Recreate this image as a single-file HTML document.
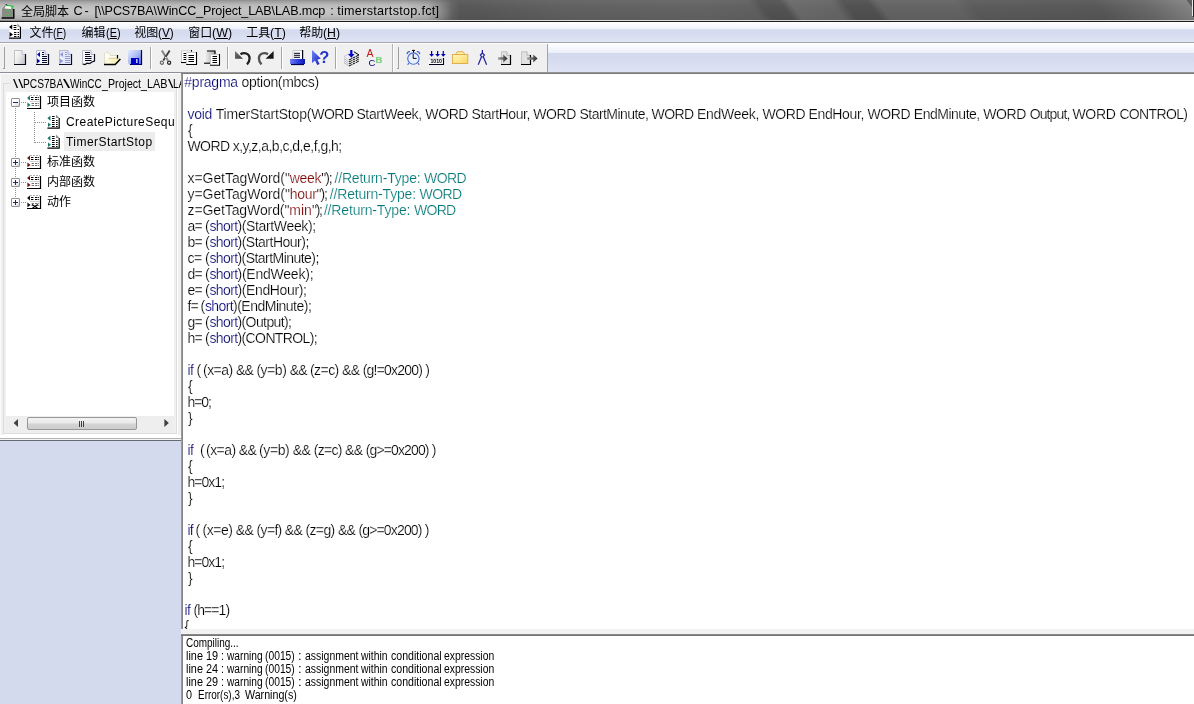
<!DOCTYPE html>
<html lang="zh">
<head>
<meta charset="utf-8">
<title>全局脚本 C</title>
<style>
html,body{margin:0;padding:0;}
body{width:1194px;height:704px;overflow:hidden;position:relative;background:#fff;
  font-family:"Liberation Sans","Noto Sans CJK SC",sans-serif;font-size:12px;color:#000;}
.abs{position:absolute;}
/* ---------- title bar ---------- */
#title{left:0;top:0;width:1194px;height:20px;overflow:hidden;background:linear-gradient(180deg,#606060 0%,#585858 35%,#525252 100%);}
#streaks{position:absolute;left:0;top:0;width:1194px;height:20px;transform:skewX(37deg);transform-origin:50% 50%;
  background:linear-gradient(90deg,
    rgba(255,255,255,0) 470px, rgba(255,255,255,.05) 560px, rgba(255,255,255,.07) 700px, rgba(255,255,255,.05) 755px,
    rgba(0,0,0,.06) 765px, rgba(0,0,0,.06) 786px,
    rgba(255,255,255,.11) 796px, rgba(255,255,255,.08) 838px,
    rgba(0,0,0,.08) 850px, rgba(0,0,0,.08) 874px,
    rgba(255,255,255,.07) 884px, rgba(255,255,255,.07) 960px,
    rgba(255,255,255,.02) 975px, rgba(255,255,255,.0) 1100px, rgba(255,255,255,.10) 1150px, rgba(255,255,255,.28) 1200px);}
#tline1{left:0;top:20px;width:1194px;height:1px;background:linear-gradient(90deg,#8a8a8a 0,#e0e0e0 300px,#d0d0d0 1194px);}
#tline2{left:0;top:21px;width:1194px;height:1px;background:#1c1c1c;}
#glow{left:0;top:0;width:470px;height:20px;
  background:linear-gradient(180deg,#8e8e8e 0px,#a4a4a4 2px,#bababa 5px,#c4c4c4 9px,#c2c2c2 14px,#b4b4b4 18px,#a8a8a8 20px);
  -webkit-mask-image:linear-gradient(90deg,#000 0px,#000 405px,rgba(0,0,0,.82) 428px,rgba(0,0,0,.45) 442px,rgba(0,0,0,.12) 452px,transparent 460px);
  mask-image:linear-gradient(90deg,#000 0px,#000 405px,rgba(0,0,0,.82) 428px,rgba(0,0,0,.45) 442px,rgba(0,0,0,.12) 452px,transparent 460px);}
.tt2{position:absolute;top:2px;height:18px;line-height:18px;font-size:12.6px;white-space:pre;color:#000;
  font-family:"Liberation Sans","Noto Sans CJK SC",sans-serif;}
/* ---------- menu bar ---------- */
#menu{left:0;top:22px;width:1194px;height:21px;
  background:linear-gradient(180deg,#ffffff 0%,#f8f9fd 15%,#eff2fa 35%,#d6dcef 38%,#d6dcef 60%,#e0e5f5 100%);
  border-bottom:1px solid #a5a7ad;box-sizing:border-box;}
.mi{position:absolute;top:24px;height:18px;line-height:18px;font-size:12px;white-space:pre;}
.mi u{text-decoration:underline;text-underline-offset:1px;}
.mi span{font-size:13px;display:inline-block;transform-origin:0 50%;}
/* ---------- tool bar ---------- */
#tool{left:0;top:43px;width:1194px;height:29px;
  background:linear-gradient(180deg,#ffffff 0%,#f5f7fc 18%,#eceff8 33%,#d4daee 36%,#d6dcef 62%,#dfe4f4 100%);
  border-bottom:1px solid #8e8e96;}
#toolgray{left:0;top:44px;width:547px;height:28px;background:#f0f0f0;border-right:1px solid #a4a4a4;}
.sep{position:absolute;top:47px;width:1px;height:22px;background:#a6a6a6;border-right:1px solid #fff;}
/* ---------- tree ---------- */
#treewrap{left:0;top:73px;width:181px;height:365px;background:#f0f0f0;}
#gbox{left:3px;top:83px;width:174px;height:351px;border:1px solid #dcdcdc;box-sizing:border-box;box-shadow:1px 1px 0 #fff;}
#tree{left:6px;top:92px;width:168px;height:324px;background:#fff;}
#lav{left:0;top:441px;width:181px;height:263px;background:#d4daed;}
.tl{position:absolute;white-space:pre;font-size:12px;height:18px;line-height:18px;}

.ic{position:absolute;top:49px;width:16px;height:16px;overflow:visible;}
.grip{position:absolute;top:47px;width:2px;height:22px;border-right:1px solid #a0a0a0;border-bottom:1px solid #a0a0a0;background:linear-gradient(90deg,#f0f0f0 0,#f0f0f0 1px,#fff 1px);box-sizing:border-box;}
.vd{position:absolute;width:1px;background:repeating-linear-gradient(180deg,#909090 0,#909090 1px,transparent 1px,transparent 2px);}
.hd{position:absolute;height:1px;background:repeating-linear-gradient(90deg,#909090 0,#909090 1px,transparent 1px,transparent 2px);}
.ex{position:absolute;left:11px;width:9px;height:9px;box-sizing:border-box;border:1px solid #919191;border-radius:1px;background:linear-gradient(135deg,#fff 0%,#fff 40%,#d8d8d8 100%);}
.ex i{position:absolute;left:1px;top:3px;width:5px;height:1px;background:#1a2a6a;}
.ex b{position:absolute;left:3px;top:1px;width:1px;height:5px;background:#1a2a6a;}
.ti{position:absolute;width:16px;height:16px;overflow:visible;}
.tt{letter-spacing:0.45px;}
/* ---------- code ---------- */
#code{left:183px;top:74px;width:1011px;height:555px;background:#fff;overflow:hidden;}
.cl{position:absolute;white-space:pre;font-size:14px;height:16px;line-height:16px;margin-top:0px;-webkit-text-stroke:0.2px #fff;
  font-family:"Liberation Sans",sans-serif;}
.k{color:#000074}.s{color:#7a0000}.c{color:#007676}
/* ---------- output ---------- */
#out{left:183px;top:636px;width:1011px;height:68px;background:#fff;overflow:hidden;}
.ol{position:absolute;white-space:pre;font-size:12px;height:13px;line-height:13px;font-family:"Liberation Sans",sans-serif;transform-origin:0 0;}
</style>
</head>
<body>
<div id="wrap" style="position:absolute;left:0;top:0;width:1194px;height:704px;will-change:transform">
<div id="title" class="abs"><div id="streaks"></div></div>
<div id="glow" class="abs"></div>
<div id="tline1" class="abs"></div><div id="tline2" class="abs"></div>
<div class="abs" style="left:1192px;top:0;width:1px;height:16px;background:#e8e8e8"></div><div class="abs" style="left:1193px;top:0;width:1px;height:17px;background:#202020"></div>
<div class="tt2" style="left:21.1px;font-family:'Noto Sans CJK SC',sans-serif;font-size:12px">全局脚本</div>
<div class="tt2" style="left:73.40px;letter-spacing:-2.000px">C</div>
<div class="tt2" style="left:84.40px;letter-spacing:0.600px">-</div>
<div class="tt2" style="left:94.50px;letter-spacing:-0.128px">[\\PCS7BA\WinCC_Project_LAB\LAB.mcp</div>
<div class="tt2" style="left:330.30px;letter-spacing:-0.300px">:</div>
<div class="tt2" style="left:337.20px;letter-spacing:0.296px">timerstartstop.fct]</div>

<div id="menu" class="abs"></div>
<div class="mi" style="left:29.4px">文件<span style="transform:scaleX(0.79)">(<u>F</u>)</span></div>
<div class="mi" style="left:81.6px">编辑<span style="transform:scaleX(0.84)">(<u>E</u>)</span></div>
<div class="mi" style="left:134.2px">视图<span style="transform:scaleX(0.91)">(<u>V</u>)</span></div>
<div class="mi" style="left:188.2px">窗口<span style="transform:scaleX(0.955)">(<u>W</u>)</span></div>
<div class="mi" style="left:246.2px">工具<span style="transform:scaleX(0.95)">(<u>T</u>)</span></div>
<div class="mi" style="left:299.3px">帮助<span style="transform:scaleX(0.945)">(<u>H</u>)</span></div>
<!-- title icon -->
<svg class="abs" style="left:1px;top:3px" width="15" height="16" viewBox="0 0 15 16"><path d="M1 14.5V6L4 2.5H11L12.5 6V14.5Z" fill="#8a8a86"/><path d="M3.5 5.5L5 2.2L11.5 3.2L10 6Z" fill="#f4fff0"/><path d="M4.5 2L12 3.4L10.6 5.4" fill="none" stroke="#2cc040" stroke-width="1.2"/><path d="M5 1.2L6 2.4" stroke="#000" stroke-width="1"/><path d="M12.8 6V15H0.6" fill="none" stroke="#000" stroke-width="1.4"/><text x="3.4" y="13.2" font-family="Liberation Sans, sans-serif" font-size="9.5" fill="#3cc24c" fill-opacity=".85">C</text></svg>
<!-- menu icon -->
<svg class="abs" style="left:8px;top:23px" width="14" height="16" viewBox="0 0 14 16"><path d="M4 0.6H9.4L12.6 3.8V15H1.4V0.6Z" fill="#fff"/><path d="M9.4 0.6V3.8H12.6Z" fill="#909090"/><path d="M12.4 3.8V15.2H1" fill="none" stroke="#000" stroke-width="1.2"/><path d="M1 4L4.2 1.4V6.6Z M1.6 9V14L5 11.5Z" fill="#000"/><path d="M5.6 2.5H8.4M5.6 4.5H8.4M5.6 6.5H8.4M9.6 6.5H11M6 9.5H8.4M9.6 9.5H11M6 11.5H8.4M9.6 11.5H11M6 13.5H8.4M9.6 13.5H11" stroke="#000" stroke-width="1.1"/></svg>
<div id="tool" class="abs"></div>
<div id="toolgray" class="abs"></div>
<!-- toolbar grippers / separators -->
<div class="grip" style="left:3px"></div>
<div class="grip" style="left:397px"></div>
<div class="sep" style="left:150px"></div>
<div class="sep" style="left:227px"></div>
<div class="sep" style="left:281px"></div>
<div class="sep" style="left:335px"></div>
<div class="abs" style="left:392px;top:44px;width:1px;height:28px;background:#b4b4b4"></div>
<div class="abs" style="left:393px;top:44px;width:1px;height:28px;background:#fff"></div>

<svg class="ic" style="left:13px;width:16px;height:16px" viewBox="0 0 16 16"><defs><linearGradient id="gN" x1="0" y1="0" x2="1" y2="0.6"><stop offset="0" stop-color="#ffffff"/><stop offset="0.5" stop-color="#ecece8"/><stop offset="1" stop-color="#c4c6d2"/></linearGradient></defs>
<path d="M1 1H9L13 5V16H1Z" fill="url(#gN)"/><path d="M1.5 15V1.5H9" fill="none" stroke="#c0c0c4"/><path d="M9 1.5L9 5.5H13" fill="#e8e8f4" stroke="#b8b8c8" stroke-width=".8"/><path d="M12.5 5V15.5H1" fill="none" stroke="#0a0a18" stroke-width="1.2"/></svg>

<svg class="ic" style="left:35px;width:16px;height:16px" viewBox="0 0 16 16"><path d="M1 1H10L14 5V16H1Z" fill="#f4f6ff"/><path d="M1.5 15V1.5H10" fill="none" stroke="#b8bcd0"/><path d="M10 1.5V5.5H14" fill="#d8dcf8" stroke="#a8acd0" stroke-width=".8"/><path d="M13.5 5V15.5H1" fill="none" stroke="#0a0a20" stroke-width="1.2"/>
<path d="M2 5.5L5 3V8Z M2 9.5V14.5L5.2 12Z" fill="#0808a0"/><path d="M7 3.5H9M7 5.5H9M7 7.5H12M7 9.5H12M7 11.5H12M7 13.5H12" stroke="#080828" stroke-width="1"/></svg>

<svg class="ic" style="left:58px;width:16px;height:16px" viewBox="0 0 16 16"><path d="M1 1H10L14 5V16H1Z" fill="#e4e8fc"/><path d="M1.5 15V1.5H10" fill="none" stroke="#b8bcc8"/><path d="M10 1.5V5.5H14" fill="#d8dcf8" stroke="#a8acc8" stroke-width=".8"/><path d="M13.5 5V15.5H1" fill="none" stroke="#0a0a20" stroke-width="1.2"/>
<path d="M2 5.5L5 3V8Z M2 9.5V14.5L5.2 12Z" fill="#9494d0"/><path d="M2 8L5 9.5V11L2 9.5Z" fill="#f4fcff"/><path d="M7 3.5H9M7 5.5H9M7 7.5H12M7 9.5H12M7 11.5H12M7 13.5H12" stroke="#949cd4" stroke-width="1"/></svg>

<svg class="ic" style="left:81px;width:16px;height:16px" viewBox="0 0 16 16"><path d="M1 1H10L14 5V12L11 13L8 14.5L6 14L4 15.5L1 15Z" fill="#f6f6fc"/><path d="M1.5 14.5V1.5H10" fill="none" stroke="#b8bcc8"/><path d="M10 1.5V5.5H14" fill="#e0e0f0" stroke="#b0b0c8" stroke-width=".8"/><path d="M13.5 5V12L11 13L8.5 14.6L6 14.2L4 15.5L1.5 15" fill="none" stroke="#0a0a18" stroke-width="1.2"/>
<path d="M4 3.5H9M4 5.5H9M4 7.5H10.5M4 9.5H10.5M4 11.5H10.5" stroke="#080820" stroke-width="1"/></svg>

<svg class="ic" style="left:104px;width:17px;height:16px" viewBox="0 0 17 16"><defs><linearGradient id="gO" x1="0" y1="0" x2="1" y2="0"><stop offset="0" stop-color="#fffef0"/><stop offset="1" stop-color="#f6eca0"/></linearGradient></defs>
<path d="M0.5 14.5V4.5L1.5 3.5H4.5L6.5 6.5H13V9H5.5Z" fill="#fffdf0" stroke="#d8d4c0" stroke-width=".8"/><path d="M0.5 15L5.5 9H16L11 15Z" fill="url(#gO)"/><path d="M5 9.5H13" stroke="#d8d0a0" stroke-width=".8"/><path d="M13.5 6V9.5" stroke="#000" stroke-width="1.2"/><path d="M0 15.4H11.2L16.4 10" fill="none" stroke="#000" stroke-width="1.5"/></svg>

<svg class="ic" style="left:127px;width:16px;height:16px" viewBox="0 0 16 16"><defs><linearGradient id="gS" x1="0" y1="0" x2="1" y2="1"><stop offset="0" stop-color="#e8eeff"/><stop offset="0.5" stop-color="#a8baf4"/><stop offset="1" stop-color="#4a66dc"/></linearGradient></defs>
<path d="M1 1H15V16H3L1 14Z" fill="url(#gS)"/><path d="M14.5 1V15.5H3" fill="none" stroke="#000060" stroke-width="1.2"/><rect x="4" y="9" width="8" height="6.4" fill="#0000c8"/><rect x="9" y="10" width="1.6" height="4" fill="#b8c4f4"/></svg>

<svg class="ic" style="left:159px;width:16px;height:16px" viewBox="0 0 16 16"><path d="M2.9 1.4L8.9 11.6" stroke="#868686" stroke-width="2" fill="none"/><path d="M10.7 1.4L4.3 11.6" stroke="#3c3c3c" stroke-width="1.8" fill="none"/><circle cx="2.9" cy="13.7" r="1.55" fill="#fbfbfb" stroke="#6a6a6a" stroke-width="1.3"/><circle cx="10.1" cy="13.7" r="1.55" fill="#fbfbfb" stroke="#2c2c2c" stroke-width="1.3"/><circle cx="6.7" cy="8.6" r=".8" fill="#fff"/></svg>

<svg class="ic" style="left:180px;width:18px;height:16px" viewBox="0 0 18 16"><rect x="1" y="1.3" width="10" height="12.4" fill="#fff"/><path d="M1.5 13V1.8H10.5" fill="none" stroke="#c8c8c8"/><path d="M1 13.5H6" stroke="#000" stroke-width="1.1"/><path d="M11.5 1V3" stroke="#000" stroke-width="1.1"/><path d="M3.5 4.5H6M3.5 6.5H6M3.5 8.5H6M3.5 10.5H6" stroke="#000"/>
<rect x="6.2" y="2.8" width="10.6" height="13" fill="#fff"/><path d="M6.7 15V3.3H16" fill="none" stroke="#c8c8c8"/><path d="M16.5 3V15.5H6.2" fill="none" stroke="#000" stroke-width="1.1"/><path d="M8.5 6.5H14M8.5 8.5H14M8.5 10.5H14M8.5 12.5H14" stroke="#000"/></svg>

<svg class="ic" style="left:203px;width:18px;height:17px" viewBox="0 0 18 17"><defs><linearGradient id="gP" x1="0" y1="0" x2="1" y2="0"><stop offset="0" stop-color="#f8f8f8"/><stop offset="1" stop-color="#a8a8a8"/></linearGradient></defs>
<rect x="1" y="1.5" width="11" height="13" fill="url(#gP)"/><path d="M4 2H12V5" fill="none" stroke="#000" stroke-width="1.2"/><path d="M1 14.2H7" stroke="#000" stroke-width="1.1"/>
<rect x="7" y="5" width="9.8" height="11.6" fill="#fff"/><path d="M7.5 16V5.5H16" fill="none" stroke="#c8c8c8"/><path d="M16.5 5V16.2H7" fill="none" stroke="#000" stroke-width="1.1"/><path d="M9.5 7.5H14M9.5 9.5H14M9.5 11.5H14M9.5 13.5H14" stroke="#000"/></svg>

<svg class="ic" style="left:234px;width:17px;height:16px" viewBox="0 0 17 16"><defs><linearGradient id="gU" x1="0" y1="0" x2="1" y2="1"><stop offset="0" stop-color="#787878"/><stop offset="1" stop-color="#383838"/></linearGradient></defs>
<path d="M1 2V9.8H9Z" fill="url(#gU)"/><path d="M6.5 5.2C10 3 15.5 4.2 15.6 9.2C15.6 12 14.5 14 13 15.4" fill="none" stroke="#202020" stroke-width="2.3"/></svg>
<svg class="ic" style="left:257px;width:17px;height:16px" viewBox="0 0 17 16"><path d="M16.6 2V9.8H8.6Z" fill="#181818"/><path d="M11 5.2C7.5 3 2 4.2 1.9 9.2C1.9 12 3 14 4.5 15.4" fill="none" stroke="#505050" stroke-width="2.3"/></svg>

<svg class="ic" style="left:289px;width:17px;height:16px" viewBox="0 0 17 16"><defs><linearGradient id="gPr" x1="0" y1="0" x2="1" y2="0"><stop offset="0" stop-color="#7080ec"/><stop offset="0.6" stop-color="#2838e0"/><stop offset="1" stop-color="#1018a8"/></linearGradient></defs>
<rect x="3.4" y="1" width="10" height="9.4" fill="#fafafe"/><path d="M3.9 10V1.5H13" fill="none" stroke="#c8c8c8"/><path d="M13.6 1V10" stroke="#000018" stroke-width="1.2"/><path d="M5 4.3H11M5 6.3H11M5 8.3H11" stroke="#000018" stroke-width="1"/><rect x="1" y="10" width="15" height="5" fill="url(#gPr)"/><path d="M2 15.5H15" stroke="#000058" stroke-width="1.2"/></svg>

<svg class="ic" style="left:311px;width:18px;height:16px" viewBox="0 0 18 16"><defs><linearGradient id="gH" x1="0" y1="0" x2="1" y2="1"><stop offset="0" stop-color="#6a8af8"/><stop offset="1" stop-color="#1818b8"/></linearGradient></defs>
<path d="M1 1V14L4 11.5L6.3 16L8.6 15L6.4 10.8L9.8 9.6Z" fill="url(#gH)"/><text x="8.2" y="14.4" font-family="Liberation Sans, sans-serif" font-weight="bold" font-size="16.5" fill="#2434c8">?</text></svg>

<svg class="ic" style="left:343px;width:17px;height:18px" viewBox="0 0 17 18"><path d="M1 13.5 L10.5 8.5 L16 12 L6 17 Z" fill="#fff"/><path d="M1 13.5 L6 17" stroke="#9a9aa4" stroke-width=".8" fill="none"/><path d="M6 17 L16 12" stroke="#000" stroke-width="1" stroke-dasharray="3.2 .7" fill="none"/><path d="M1 11.5 L10.5 6.5 L16 10 L6 15 Z" fill="#fff"/><path d="M1 11.5 L6 15" stroke="#9a9aa4" stroke-width=".8" fill="none"/><path d="M6 15 L16 10" stroke="#000" stroke-width="1" stroke-dasharray="3.2 .7" fill="none"/><path d="M1 9.5 L10.5 4.5 L16 8 L6 13 Z" fill="#fff"/><path d="M1 9.5 L6 13" stroke="#9a9aa4" stroke-width=".8" fill="none"/><path d="M6 13 L16 8" stroke="#000" stroke-width="1" stroke-dasharray="3.2 .7" fill="none"/><path d="M1 7.5 L10.5 2.5 L16 6 L6 11 Z" fill="#eeeeff" stroke="#b4b4c4" stroke-width=".6"/><path d="M6 11 L16 6" stroke="#000" stroke-width="1" stroke-dasharray="3.2 .7" fill="none"/><path d="M11 2.8 L16 6" stroke="#000" stroke-width="1" fill="none"/><path d="M7.2 1H9.4V5H11.6L8.3 8.7L5 5H7.2Z" fill="#0000d0"/></svg>

<svg class="ic" style="left:366px;width:16px;height:18px" viewBox="0 0 16 18"><text x="0.6" y="8.4" font-family="Liberation Sans, sans-serif" font-size="10.5" fill="#c01818">A</text><text x="9.4" y="14.4" font-family="Liberation Sans, sans-serif" font-size="9.5" font-weight="bold" fill="#44b844" stroke="#c8f0c8" stroke-width=".3">B</text><text x="2.6" y="17" font-family="Liberation Sans, sans-serif" font-size="9.5" fill="#000078">C</text></svg>

<svg class="ic" style="left:405px;width:17px;height:16px" viewBox="0 0 17 16"><circle cx="8.4" cy="9.6" r="5.7" fill="#e8f0ff" stroke="#4868d0" stroke-width="1.1"/><path d="M2 5.2C2.3 3.4 3.6 2.4 5 2.6M14.8 5.2C14.5 3.4 13.2 2.4 11.8 2.6" fill="none" stroke="#4060c8" stroke-width="1.2"/><path d="M3.8 14.4L2.6 15.6M13 14.4L14.2 15.6" stroke="#3050c0" stroke-width="1.2"/><path d="M7 1.4H10M8.5 1.4V3.6" stroke="#000" stroke-width="1"/><path d="M8.2 5V9.4H11.6" fill="none" stroke="#000" stroke-width="0.95"/></svg>

<svg class="ic" style="left:428px;width:17px;height:16px" viewBox="0 0 17 16"><g fill="#0000b0"><path d="M3 2H4.2V5H6L3.6 7.8L1.2 5H3Z"/><path d="M9 2H10.2V5H12L9.6 7.8L7.2 5H9Z"/><path d="M15 2H16.2V5H18L15.6 7.8L13.2 5H15Z" transform="translate(-0.3 0)"/></g><rect x="1" y="9.6" width="15" height="6" fill="#fdfdff"/><path d="M1 10H15" stroke="#c8c8d0"/><path d="M15.5 9V15.5H1" fill="none" stroke="#000018" stroke-width="1.1"/><text x="2.4" y="14.4" font-family="Liberation Sans, sans-serif" font-weight="bold" font-size="5.8" textLength="11.6" lengthAdjust="spacingAndGlyphs" fill="#000">1010</text></svg>

<svg class="ic" style="left:451px;width:18px;height:16px" viewBox="0 0 18 16"><defs><linearGradient id="gF" x1="0" y1="0" x2="1" y2="1"><stop offset="0" stop-color="#fff4c0"/><stop offset="0.5" stop-color="#ffe890"/><stop offset="1" stop-color="#ffd860"/></linearGradient></defs>
<path d="M4.5 5.5L6.5 2.7H12L14 5.5" fill="#ffeea0" stroke="#d8a840" stroke-width=".9"/><rect x="1.4" y="5.5" width="15.4" height="9" fill="url(#gF)" stroke="#dca848" stroke-width=".9"/></svg>

<svg class="ic" style="left:476px;width:14px;height:16px" viewBox="0 0 14 16"><g stroke="#2020a0" fill="none" stroke-width="1.2"><path d="M6.4 1V4"/><path d="M6.4 4L4.4 6L5.8 8L7 8L8.4 6Z"/><path d="M5.4 8L2.2 15.8M7.4 8L10.6 15.8"/></g></svg>

<svg class="ic" style="left:497px;width:16px;height:16px" viewBox="0 0 16 16"><defs><linearGradient id="gA" x1="0" y1="0" x2="1" y2="0"><stop offset="0" stop-color="#a8a8a8"/><stop offset="1" stop-color="#282828"/></linearGradient></defs>
<path d="M4 2.3H10L14 6V16H4Z" fill="#e2e2e2"/><path d="M4.5 15V2.8H10" fill="none" stroke="#c4c4c4"/><path d="M10 2.8V6.3H13.6" fill="#f0f0f0" stroke="#a8a8a8" stroke-width=".8"/><path d="M13.5 6V15.5H4" fill="none" stroke="#000" stroke-width="1.2"/><path d="M1 8.2H6.2V5.6L10.6 9.5L6.2 13.4V10.8H1Z" fill="url(#gA)"/></svg>

<svg class="ic" style="left:520px;width:18px;height:16px" viewBox="0 0 18 16"><path d="M1 2.3H7L11 6V16H1Z" fill="#e2e2e2"/><path d="M1.5 15V2.8H7" fill="none" stroke="#c4c4c4"/><path d="M7 2.8V6.3H10.6" fill="#f0f0f0" stroke="#a8a8a8" stroke-width=".8"/><path d="M10.5 6V15.5H1" fill="none" stroke="#000" stroke-width="1.2"/><path d="M7 8.2H13.2V5.6L17.6 9.5L13.2 13.4V10.8H7Z" fill="url(#gA)"/></svg>


<div id="treewrap" class="abs"></div>
<div class="abs" style="left:0;top:73px;width:181px;height:1px;background:#fdfdfd"></div><div class="abs" style="left:0;top:73px;width:1px;height:365px;background:#fafafa"></div>
<div id="gbox" class="abs"></div>
<div id="tree" class="abs"></div>
<div class="abs" style="left:0;top:435px;width:181px;height:3px;background:#fff"></div>
<div class="abs" style="left:0;top:438px;width:181px;height:1px;background:#b4b4b4"></div>
<div class="abs" style="left:0;top:439px;width:181px;height:1px;background:#f4f4f4"></div>
<div class="abs" style="left:0;top:440px;width:181px;height:1px;background:#666a72"></div>
<div id="lav" class="abs"></div>
<!-- tree header row -->
<div class="abs" style="left:10px;top:76px;width:165px;height:15px;background:#f0f0f0"></div>
<div class="abs" style="left:0px;top:75px;width:181px;height:16px;overflow:hidden">
<div class="tl" style="left:12.70px;top:0;transform:scaleX(1.5438);transform-origin:0 0">\\</div>
<div class="tl" style="left:23.00px;top:0;transform:scaleX(0.8488);transform-origin:0 0">PCS7BA</div>
<div class="tl" style="left:63.20px;top:0;transform:scaleX(2.1533);transform-origin:0 0">\</div>
<div class="tl" style="left:70.40px;top:0;transform:scaleX(0.8351);transform-origin:0 0">WinCC</div>
<div class="tl" style="left:102.17px;top:0;transform:scaleX(0.8715);transform-origin:0 0">_</div>
<div class="tl" style="left:108.00px;top:0;transform:scaleX(0.8856);transform-origin:0 0">Project</div>
<div class="tl" style="left:141.08px;top:0;transform:scaleX(0.8846);transform-origin:0 0">_</div>
<div class="tl" style="left:147.00px;top:0;transform:scaleX(0.9036);transform-origin:0 0">LAB</div>
<div class="tl" style="left:167.50px;top:0;transform:scaleX(1.6449);transform-origin:0 0">\</div>
<div class="tl" style="left:173.00px;top:0;transform:scaleX(0.8365);transform-origin:0 0">LAB.mcp</div>
</div>
<!-- dotted connectors -->
<div class="vd" style="left:15px;top:108px;height:94px"></div>
<div class="vd" style="left:34px;top:112px;height:31px"></div>
<div class="hd" style="left:21px;top:102px;width:5px"></div>
<div class="hd" style="left:35px;top:122px;width:11px"></div>
<div class="hd" style="left:35px;top:142px;width:11px"></div>
<div class="hd" style="left:21px;top:162px;width:5px"></div>
<div class="hd" style="left:21px;top:182px;width:5px"></div>
<div class="hd" style="left:21px;top:202px;width:5px"></div>
<!-- expanders -->
<div class="ex" style="top:98px"><i></i></div>
<div class="ex" style="top:158px"><i></i><b></b></div>
<div class="ex" style="top:178px"><i></i><b></b></div>
<div class="ex" style="top:198px"><i></i><b></b></div>
<!-- selection -->
<div class="abs" style="left:64px;top:132px;width:91px;height:19px;background:#ececec"></div>
<!-- folder icons -->
<svg class="ti" style="left:26px;top:94px" viewBox="0 0 16 16"><rect x="4" y="1.4" width="11" height="13.2" fill="#fff"/><path d="M14.5 2V14.5H1" fill="none" stroke="#000" stroke-width="1.2"/><path d="M4 1.5H14" stroke="#b0b0b0" stroke-dasharray="2 1"/><path d="M1 4L4 1.4V6.6Z M1.4 8.6V13.2L4.6 10.9Z" fill="#1a7a6a"/><path d="M5 3.5H8M9 3.5H13M5 5.5H8M9 5.5H13" stroke="#000" stroke-dasharray="2.4 .8"/><path d="M5.6 9.5H8M9 9.5H13M5.6 11.5H8M9 11.5H13" stroke="#707070" stroke-dasharray="2.4 .8"/><path d="M4 7.5H14" stroke="#d0d0d0"/></svg>
<svg class="ti" style="left:26px;top:154px" viewBox="0 0 16 16"><rect x="4" y="1.4" width="11" height="13.2" fill="#fff"/><path d="M14.5 2V14.5H1" fill="none" stroke="#000" stroke-width="1.2"/><path d="M4 1.5H14" stroke="#b0b0b0" stroke-dasharray="2 1"/><path d="M1 4L4 1.4V6.6Z M1.4 8.6V13.2L4.6 10.9Z" fill="#6a1010"/><path d="M5 3.5H8M9 3.5H13M5 5.5H8M9 5.5H13" stroke="#000" stroke-dasharray="2.4 .8"/><path d="M5.6 9.5H8M9 9.5H13M5.6 11.5H8M9 11.5H13" stroke="#707070" stroke-dasharray="2.4 .8"/><path d="M4 7.5H14" stroke="#d0d0d0"/></svg>
<svg class="ti" style="left:26px;top:174px" viewBox="0 0 16 16"><rect x="4" y="1.4" width="11" height="13.2" fill="#fff"/><path d="M14.5 2V14.5H1" fill="none" stroke="#000" stroke-width="1.2"/><path d="M4 1.5H14" stroke="#b0b0b0" stroke-dasharray="2 1"/><path d="M1 4L4 1.4V6.6Z M1.4 8.6V13.2L4.6 10.9Z" fill="#6a1010"/><path d="M5 3.5H8M9 3.5H13M5 5.5H8M9 5.5H13" stroke="#000" stroke-dasharray="2.4 .8"/><path d="M5.6 9.5H8M9 9.5H13M5.6 11.5H8M9 11.5H13" stroke="#707070" stroke-dasharray="2.4 .8"/><path d="M4 7.5H14" stroke="#d0d0d0"/></svg>
<svg class="ti" style="left:26px;top:194px" viewBox="0 0 16 16"><rect x="4" y="1.4" width="11" height="13.2" fill="#fff"/><path d="M14.5 2V14.5H1" fill="none" stroke="#000" stroke-width="1.2"/><path d="M4 1.5H14" stroke="#b0b0b0" stroke-dasharray="2 1"/><path d="M1 4L4 1.4V6.6Z M1.4 8.6V13.2L4.6 10.9Z" fill="#101010"/><path d="M5 3.5H8M9 3.5H13M5 5.5H8M9 5.5H13" stroke="#000" stroke-dasharray="2.4 .8"/><path d="M5.6 9.5H8M9 9.5H13M5.6 11.5H8M9 11.5H13" stroke="#707070" stroke-dasharray="2.4 .8"/><path d="M4 7.5H14" stroke="#d0d0d0"/><path d="M6 10.5L12 14.5M12 10.5L6 14.5" stroke="#000" stroke-width="1.1"/></svg>
<svg class="ti" style="left:46px;top:113px" viewBox="0 0 16 16"><path d="M4 1.4H10L13.6 5V15H4Z" fill="#fff"/><path d="M10 1.4V5H13.6" fill="#909090"/><path d="M13.2 5V15.2H1.4" fill="none" stroke="#000" stroke-width="1.2"/><path d="M1.4 5.2L4.4 2.6V7.8Z M2 9.4V14L5 11.7Z" fill="#1a7a6a"/><path d="M6 3.5H8.6M6 5.5H8.6M6 7.5H8.6M10 7.5H11.6M6 9.5H8.6M10 9.5H11.6M6 11.5H8.6M10 11.5H11.6M6 13.5H8.6M10 13.5H11.6" stroke="#000" stroke-width="1.1"/></svg>
<svg class="ti" style="left:46px;top:133px" viewBox="0 0 16 16"><path d="M4 1.4H10L13.6 5V15H4Z" fill="#fff"/><path d="M10 1.4V5H13.6" fill="#909090"/><path d="M13.2 5V15.2H1.4" fill="none" stroke="#000" stroke-width="1.2"/><path d="M1.4 5.2L4.4 2.6V7.8Z M2 9.4V14L5 11.7Z" fill="#1a7a6a"/><path d="M6 3.5H8.6M6 5.5H8.6M6 7.5H8.6M10 7.5H11.6M6 9.5H8.6M10 9.5H11.6M6 11.5H8.6M10 11.5H11.6M6 13.5H8.6M10 13.5H11.6" stroke="#000" stroke-width="1.1"/></svg>

<!-- labels -->
<div class="tl" style="left:47px;top:93px">项目函数</div>
<div class="tl tt" style="left:66px;top:113px;width:108px;overflow:hidden">CreatePictureSequence</div>
<div class="tl tt" style="left:66px;top:133px">TimerStartStop</div>
<div class="tl" style="left:47px;top:153px">标准函数</div>
<div class="tl" style="left:47px;top:173px">内部函数</div>
<div class="tl" style="left:47px;top:193px">动作</div>
<!-- horizontal scrollbar -->
<div class="abs" style="left:6px;top:416px;width:168px;height:16px;background:#eeeeee"></div>
<div class="abs" style="left:27px;top:417px;width:110px;height:13px;border:1px solid #979797;border-radius:2px;box-sizing:border-box;background:linear-gradient(180deg,#f4f4f4 0%,#e8e8e8 45%,#d4d4d4 55%,#cccccc 100%)"></div>
<div class="abs" style="left:79px;top:421px;width:1px;height:6px;background:#404040;box-shadow:2px 0 0 #404040,4px 0 0 #404040"></div>
<svg class="abs" style="left:12px;top:418px" width="8" height="10" viewBox="0 0 8 10"><path d="M6 1V9L1.6 5Z" fill="#404040"/></svg>
<svg class="abs" style="left:163px;top:418px" width="8" height="10" viewBox="0 0 8 10"><path d="M1.4 1V9L5.8 5Z" fill="#404040"/></svg>


<div class="abs" style="left:181px;top:73px;width:2px;height:631px;background:linear-gradient(90deg,#a8a8a8,#787878)"></div>
<div class="abs" style="left:181px;top:72px;width:1013px;height:2px;background:linear-gradient(180deg,#a0a0a0,#6e6e6e)"></div>
<div class="abs" style="left:181px;top:629px;width:1013px;height:5px;background:#f2f2f2"></div>
<div class="abs" style="left:181px;top:634px;width:1013px;height:2px;background:linear-gradient(180deg,#909090,#6e6e6e)"></div>
<div id="code" class="abs">
<div class="cl k" style="top:0px;left:1.30px;letter-spacing:-0.245px">#pragma </div>
<div class="cl" style="top:0px;left:58.50px;letter-spacing:-0.296px">option(mbcs)</div>
<div class="cl k" style="top:32px;left:4.50px;letter-spacing:-0.276px">void </div>
<div class="cl" style="top:32px;left:32.70px;letter-spacing:-0.179px">TimerStartStop(</div>
<div class="cl" style="top:32px;left:128.30px;letter-spacing:-0.624px">WORD </div>
<div class="cl" style="top:32px;left:173.40px;letter-spacing:-0.363px">StartWeek, </div>
<div class="cl" style="top:32px;left:242.30px;letter-spacing:-0.384px">WORD </div>
<div class="cl" style="top:32px;left:288.60px;letter-spacing:-0.484px">StartHour, </div>
<div class="cl" style="top:32px;left:350.20px;letter-spacing:-0.364px">WORD </div>
<div class="cl" style="top:32px;left:396.60px;letter-spacing:-0.567px">StartMinute, </div>
<div class="cl" style="top:32px;left:468.60px;letter-spacing:-0.564px">WORD </div>
<div class="cl" style="top:32px;left:514.00px;letter-spacing:-0.293px">EndWeek, </div>
<div class="cl" style="top:32px;left:579.60px;letter-spacing:-0.444px">WORD </div>
<div class="cl" style="top:32px;left:625.60px;letter-spacing:-0.385px">EndHour, </div>
<div class="cl" style="top:32px;left:684.40px;letter-spacing:-0.364px">WORD </div>
<div class="cl" style="top:32px;left:730.80px;letter-spacing:-0.484px">EndMinute, </div>
<div class="cl" style="top:32px;left:800.20px;letter-spacing:-0.344px">WORD </div>
<div class="cl" style="top:32px;left:846.70px;letter-spacing:-0.889px">Output, </div>
<div class="cl" style="top:32px;left:889.40px;letter-spacing:-0.244px">WORD </div>
<div class="cl" style="top:32px;left:936.40px;letter-spacing:-0.644px">CONTROL)</div>
<div class="cl" style="top:48px;left:5.00px;letter-spacing:-0.500px">{</div>
<div class="cl" style="top:64px;left:4.50px;letter-spacing:-0.604px">WORD </div>
<div class="cl" style="top:64px;left:49.70px;letter-spacing:-0.517px">x,y,z,a,b,c,d,e,f,g,h;</div>
<div class="cl" style="top:96px;left:4.50px;letter-spacing:-0.060px">x=GetTagWord("</div>
<div class="cl s" style="top:96px;left:106.80px;letter-spacing:-0.297px">week</div>
<div class="cl" style="top:96px;left:138.30px;letter-spacing:-1.055px">"); </div>
<div class="cl c" style="top:96px;left:151.50px;letter-spacing:-0.200px">//Return-Type: </div>
<div class="cl c" style="top:96px;left:241.10px;letter-spacing:-0.578px">WORD</div>
<div class="cl" style="top:112px;left:4.50px;letter-spacing:-0.060px">y=GetTagWord("</div>
<div class="cl s" style="top:112px;left:106.80px;letter-spacing:-0.308px">hour</div>
<div class="cl" style="top:112px;left:133.60px;letter-spacing:-1.055px">"); </div>
<div class="cl c" style="top:112px;left:146.80px;letter-spacing:-0.186px">//Return-Type: </div>
<div class="cl c" style="top:112px;left:236.60px;letter-spacing:-0.628px">WORD</div>
<div class="cl" style="top:128px;left:4.50px;letter-spacing:-0.096px">z=GetTagWord("</div>
<div class="cl s" style="top:128px;left:106.30px;letter-spacing:0.012px">min</div>
<div class="cl" style="top:128px;left:128.90px;letter-spacing:-1.200px">"); </div>
<div class="cl c" style="top:128px;left:140.90px;letter-spacing:-0.166px">//Return-Type: </div>
<div class="cl c" style="top:128px;left:231.00px;letter-spacing:-0.703px">WORD</div>
<div class="cl" style="top:144px;left:4.50px;letter-spacing:-0.753px">a= </div>
<div class="cl" style="top:144px;left:22.10px;letter-spacing:-0.372px">(</div>
<div class="cl k" style="top:144px;left:26.40px;letter-spacing:-0.605px">short</div>
<div class="cl" style="top:144px;left:54.50px;letter-spacing:-0.360px">)(StartWeek);</div>
<div class="cl" style="top:160px;left:4.50px;letter-spacing:-0.753px">b= </div>
<div class="cl" style="top:160px;left:22.10px;letter-spacing:-0.372px">(</div>
<div class="cl k" style="top:160px;left:26.40px;letter-spacing:-0.605px">short</div>
<div class="cl" style="top:160px;left:54.50px;letter-spacing:-0.500px">)(StartHour);</div>
<div class="cl" style="top:176px;left:4.50px;letter-spacing:-0.493px">c= </div>
<div class="cl" style="top:176px;left:22.10px;letter-spacing:-0.372px">(</div>
<div class="cl k" style="top:176px;left:26.40px;letter-spacing:-0.605px">short</div>
<div class="cl" style="top:176px;left:54.50px;letter-spacing:-0.545px">)(StartMinute);</div>
<div class="cl" style="top:192px;left:4.50px;letter-spacing:-0.753px">d= </div>
<div class="cl" style="top:192px;left:22.10px;letter-spacing:-0.372px">(</div>
<div class="cl k" style="top:192px;left:26.40px;letter-spacing:-0.605px">short</div>
<div class="cl" style="top:192px;left:54.50px;letter-spacing:-0.230px">)(EndWeek);</div>
<div class="cl" style="top:208px;left:4.50px;letter-spacing:-0.753px">e= </div>
<div class="cl" style="top:208px;left:22.10px;letter-spacing:-0.372px">(</div>
<div class="cl k" style="top:208px;left:26.40px;letter-spacing:-0.605px">short</div>
<div class="cl" style="top:208px;left:54.50px;letter-spacing:-0.376px">)(EndHour);</div>
<div class="cl" style="top:224px;left:4.50px;letter-spacing:-0.956px">f= </div>
<div class="cl" style="top:224px;left:17.60px;letter-spacing:-0.372px">(</div>
<div class="cl k" style="top:224px;left:21.90px;letter-spacing:-0.605px">short</div>
<div class="cl" style="top:224px;left:50.00px;letter-spacing:-0.501px">)(EndMinute);</div>
<div class="cl" style="top:240px;left:4.50px;letter-spacing:-0.753px">g= </div>
<div class="cl" style="top:240px;left:22.10px;letter-spacing:-0.372px">(</div>
<div class="cl k" style="top:240px;left:26.40px;letter-spacing:-0.605px">short</div>
<div class="cl" style="top:240px;left:54.50px;letter-spacing:-0.601px">)(Output);</div>
<div class="cl" style="top:256px;left:4.50px;letter-spacing:-0.753px">h= </div>
<div class="cl" style="top:256px;left:22.10px;letter-spacing:-0.372px">(</div>
<div class="cl k" style="top:256px;left:26.40px;letter-spacing:-0.605px">short</div>
<div class="cl" style="top:256px;left:54.50px;letter-spacing:-0.612px">)(CONTROL);</div>
<div class="cl k" style="top:288px;left:4.40px;letter-spacing:-0.597px">if </div>
<div class="cl" style="top:288px;left:13.50px;letter-spacing:-1.031px">( </div>
<div class="cl" style="top:288px;left:20.00px;letter-spacing:-0.531px">(x=a) </div>
<div class="cl" style="top:288px;left:53.00px;letter-spacing:-0.726px">&amp;&amp; </div>
<div class="cl" style="top:288px;left:73.40px;letter-spacing:-0.465px">(y=b) </div>
<div class="cl" style="top:288px;left:106.80px;letter-spacing:-0.793px">&amp;&amp; </div>
<div class="cl" style="top:288px;left:127.00px;letter-spacing:-0.565px">(z=c) </div>
<div class="cl" style="top:288px;left:159.00px;letter-spacing:-0.626px">&amp;&amp; </div>
<div class="cl" style="top:288px;left:179.70px;letter-spacing:-0.784px">(g!=0x200) </div>
<div class="cl" style="top:288px;left:242.30px;letter-spacing:-0.800px">)</div>
<div class="cl" style="top:304px;left:5.00px;letter-spacing:-0.500px">{</div>
<div class="cl" style="top:320px;left:4.50px;letter-spacing:-1.112px">h=0;</div>
<div class="cl" style="top:336px;left:5.00px;letter-spacing:-0.500px">}</div>
<div class="cl k" style="top:368px;left:4.50px;letter-spacing:-0.545px">if  </div>
<div class="cl" style="top:368px;left:17.10px;letter-spacing:-1.200px">( </div>
<div class="cl" style="top:368px;left:23.10px;letter-spacing:-0.581px">(x=a) </div>
<div class="cl" style="top:368px;left:55.80px;letter-spacing:-0.759px">&amp;&amp; </div>
<div class="cl" style="top:368px;left:76.10px;letter-spacing:-0.415px">(y=b) </div>
<div class="cl" style="top:368px;left:109.80px;letter-spacing:-0.559px">&amp;&amp; </div>
<div class="cl" style="top:368px;left:130.70px;letter-spacing:-0.682px">(z=c) </div>
<div class="cl" style="top:368px;left:162.00px;letter-spacing:-0.626px">&amp;&amp; </div>
<div class="cl" style="top:368px;left:182.70px;letter-spacing:-0.864px">(g&gt;=0x200) </div>
<div class="cl" style="top:368px;left:248.70px;letter-spacing:-0.700px">)</div>
<div class="cl" style="top:384px;left:5.00px;letter-spacing:-0.500px">{</div>
<div class="cl" style="top:400px;left:4.50px;letter-spacing:-0.972px">h=0x1;</div>
<div class="cl" style="top:416px;left:5.00px;letter-spacing:-0.500px">}</div>
<div class="cl k" style="top:448px;left:4.50px;letter-spacing:-0.930px">if </div>
<div class="cl" style="top:448px;left:12.60px;letter-spacing:-0.781px">( </div>
<div class="cl" style="top:448px;left:19.60px;letter-spacing:-0.498px">(x=e) </div>
<div class="cl" style="top:448px;left:52.80px;letter-spacing:-0.593px">&amp;&amp; </div>
<div class="cl" style="top:448px;left:73.60px;letter-spacing:-0.680px">(y=f) </div>
<div class="cl" style="top:448px;left:101.80px;letter-spacing:-0.659px">&amp;&amp; </div>
<div class="cl" style="top:448px;left:122.40px;letter-spacing:-0.598px">(z=g) </div>
<div class="cl" style="top:448px;left:155.00px;letter-spacing:-0.726px">&amp;&amp; </div>
<div class="cl" style="top:448px;left:175.40px;letter-spacing:-0.836px">(g&gt;=0x200) </div>
<div class="cl" style="top:448px;left:241.70px;letter-spacing:-0.700px">)</div>
<div class="cl" style="top:464px;left:5.00px;letter-spacing:-0.500px">{</div>
<div class="cl" style="top:480px;left:4.50px;letter-spacing:-0.972px">h=0x1;</div>
<div class="cl" style="top:496px;left:5.00px;letter-spacing:-0.500px">}</div>
<div class="cl k" style="top:528px;left:1.40px;letter-spacing:-0.597px">if </div>
<div class="cl" style="top:528px;left:10.50px;letter-spacing:-0.931px">(h==1)</div>
<div class="cl" style="top:544px;left:1.50px;letter-spacing:-0.500px">{</div>
</div>

<div id="out" class="abs">
<div class="ol" style="top:1px;left:2.70px;transform:scaleX(0.8299)">Compiling...</div>
<div class="ol" style="top:14px;left:2.70px;transform:scaleX(0.9059)">line 19 : </div>
<div class="ol" style="top:14px;left:43.75px;transform:scaleX(0.8499)">warning </div>
<div class="ol" style="top:14px;left:82.30px;transform:scaleX(0.8583)">(0015) </div>
<div class="ol" style="top:14px;left:114.71px;transform:scaleX(1.0931)">: </div>
<div class="ol" style="top:14px;left:122.00px;transform:scaleX(0.8712)">assignment </div>
<div class="ol" style="top:14px;left:178.37px;transform:scaleX(0.8653)">within </div>
<div class="ol" style="top:14px;left:207.80px;transform:scaleX(0.8828)">conditional </div>
<div class="ol" style="top:14px;left:261.40px;transform:scaleX(0.8648)">expression</div>
<div class="ol" style="top:27px;left:2.70px;transform:scaleX(0.9059)">line 24 : </div>
<div class="ol" style="top:27px;left:43.75px;transform:scaleX(0.8499)">warning </div>
<div class="ol" style="top:27px;left:82.30px;transform:scaleX(0.8583)">(0015) </div>
<div class="ol" style="top:27px;left:114.71px;transform:scaleX(1.0931)">: </div>
<div class="ol" style="top:27px;left:122.00px;transform:scaleX(0.8712)">assignment </div>
<div class="ol" style="top:27px;left:178.37px;transform:scaleX(0.8653)">within </div>
<div class="ol" style="top:27px;left:207.80px;transform:scaleX(0.8828)">conditional </div>
<div class="ol" style="top:27px;left:261.40px;transform:scaleX(0.8648)">expression</div>
<div class="ol" style="top:40px;left:2.70px;transform:scaleX(0.9059)">line 29 : </div>
<div class="ol" style="top:40px;left:43.75px;transform:scaleX(0.8499)">warning </div>
<div class="ol" style="top:40px;left:82.30px;transform:scaleX(0.8583)">(0015) </div>
<div class="ol" style="top:40px;left:114.71px;transform:scaleX(1.0931)">: </div>
<div class="ol" style="top:40px;left:122.00px;transform:scaleX(0.8712)">assignment </div>
<div class="ol" style="top:40px;left:178.37px;transform:scaleX(0.8653)">within </div>
<div class="ol" style="top:40px;left:207.80px;transform:scaleX(0.8828)">conditional </div>
<div class="ol" style="top:40px;left:261.40px;transform:scaleX(0.8648)">expression</div>
<div class="ol" style="top:53px;left:2.70px;transform:scaleX(0.8993)">0  </div>
<div class="ol" style="top:53px;left:14.70px;transform:scaleX(0.8283)">Error(s),3  </div>
<div class="ol" style="top:53px;left:62.20px;transform:scaleX(0.8895)">Warning(s)</div>
</div>
</div>
</body>
</html>
